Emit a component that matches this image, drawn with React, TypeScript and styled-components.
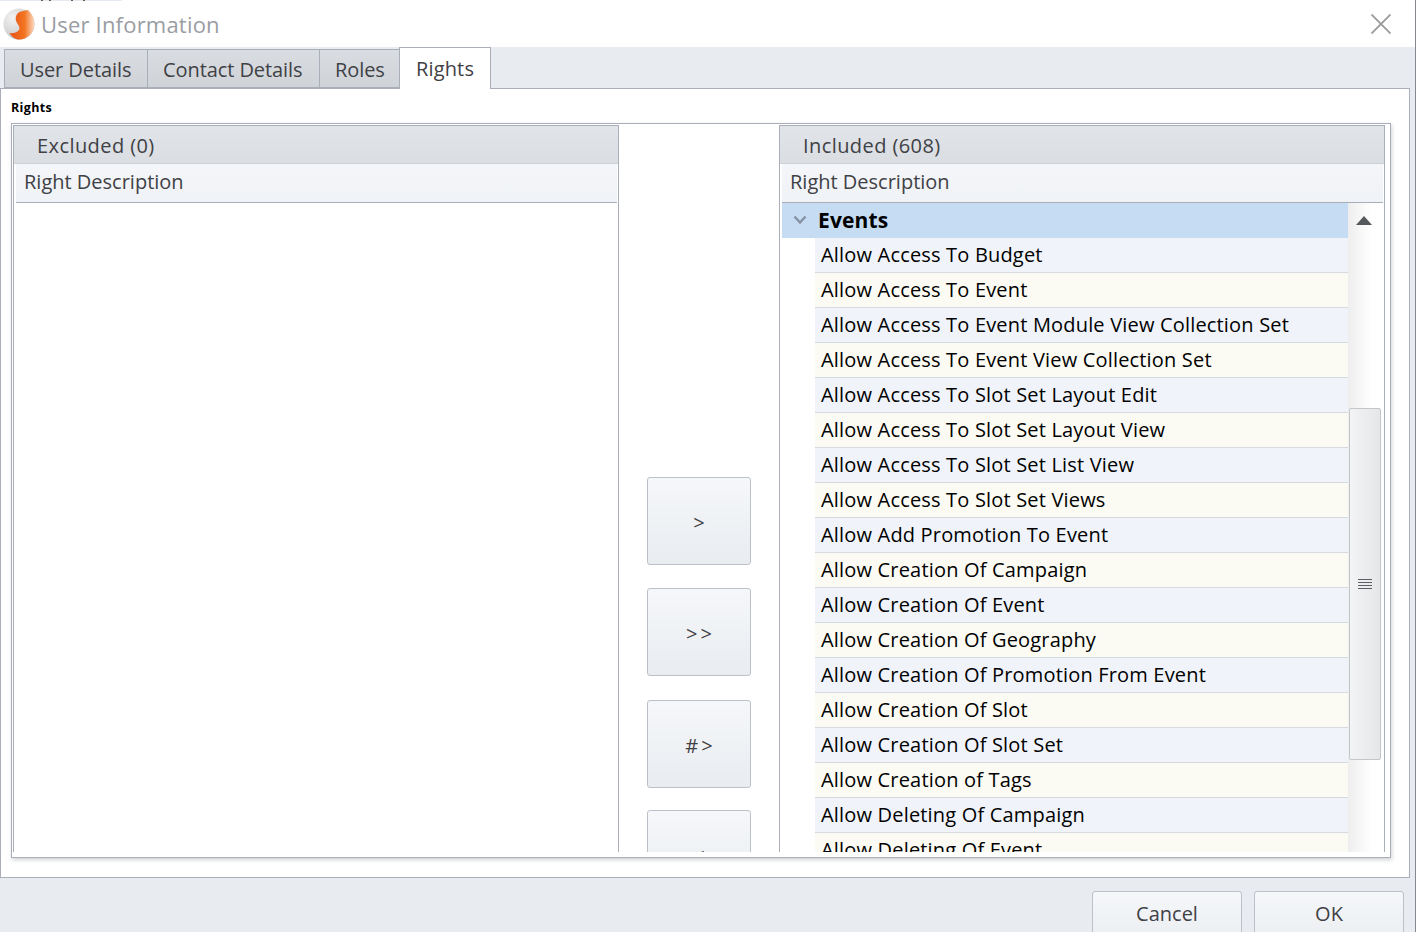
import React from 'react'
import styled, { createGlobalStyle } from 'styled-components'

const Global = createGlobalStyle`
html, body { margin: 0; padding: 0; background: #e8ebf0; }
* { box-sizing: border-box; }
`
const Window = styled.div`
width: 1416px;
height: 932px;
overflow: hidden;
display: flex;
flex-direction: column;
background: #e8ebf0;
border-right: 1px solid #85888e;
font-family: "Open Sans", "Noto Sans", sans-serif;
`
const TopSliver = styled.div`
height: 1px;
flex: none;
background: linear-gradient(90deg,
  #e6eaf2 41px, #6a5a50 41px, #6a5a50 43px, #e6eaf2 43px,
  #e6eaf2 49px, #6a5a50 49px, #6a5a50 51px, #e6eaf2 51px,
  #e6eaf2 71px, #6a5a50 71px, #6a5a50 73px, #e6eaf2 73px,
  #e6eaf2 83px, #6a5a50 83px, #6a5a50 85px, #e6eaf2 85px,
  #e6eaf2 122px, #fff 122px);
`
const TitleBar = styled.div`
height: 46px;
flex: none;
background: #fff;
display: flex;
align-items: center;
padding: 0 24px 1px 3px;
`
const Title = styled.div`
font-size: 22px;
letter-spacing: 0.2px;
color: #9a9da3;
margin-left: 6px;
padding-top: 1px;
flex: 1;
`
const TabStrip = styled.div`
height: 41px;
flex: none;
display: flex;
align-items: flex-end;
padding-left: 4px;
`
const Tab = styled.div<{ $w: number; $active?: boolean }>`
width: ${p => p.$w}px;
height: ${p => (p.$active ? 42 : 39)}px;
margin-bottom: ${p => (p.$active ? -1 : 0)}px;
margin-right: -1px;
position: relative;
z-index: ${p => (p.$active ? 1 : 0)};
display: flex;
align-items: center;
padding: ${p => (p.$active ? '0 0 0 16px' : '2px 0 0 15px')};
font-size: 20px;
letter-spacing: ${p => (p.$active ? 0.15 : -0.08)}px;
color: #3f4145;
background: ${p => (p.$active ? '#fff' : 'linear-gradient(#d9dce1, #cfd3d8)')};
border: 1px solid #a9aeb8;
border-bottom: ${p => (p.$active ? 'none' : '1px solid #a9aeb8')};
`
const Pane = styled.div`
width: 1410px;
height: 790px;
flex: none;
background: #fff;
border: 1px solid #a9aeb8;
padding: 10px 18px 0 10px;
`
const GroupLabel = styled.div`
font-size: 12.5px;
line-height: 17px;
font-weight: 700;
letter-spacing: 0.35px;
color: #000;
margin-bottom: 7px;
`
const GroupBox = styled.div`
height: 735px;
border: 1px solid #a9aeb8;
box-shadow: 1px 2px 4px rgba(120, 125, 135, 0.35);
padding: 1px 5px 5px 1px;
display: flex;
`
const ListPanel = styled.div`
width: 606px;
height: 727px;
overflow: hidden;
flex: none;
display: flex;
flex-direction: column;
border-left: 1px solid #a9aeb8;
border-right: 1px solid #a9aeb8;
border-top: 1px solid #a9aeb8;
`
const ListHeader = styled.div`
height: 38px;
flex: none;
display: flex;
align-items: center;
padding: 2px 0 0 23px;
font-size: 20px;
letter-spacing: 0.42px;
color: #3f4145;
background: linear-gradient(#e1e4e8, #dadde2);
border-bottom: 1px solid #cdd0d6;
`
const ColumnHeader = styled.div`
height: 39px;
flex: none;
margin: 0 1px 0 2px;
display: flex;
align-items: center;
padding: 0 0 3px 8px;
font-size: 20px;
letter-spacing: 0;
color: #3f4145;
background: linear-gradient(#f5f6f9, #eff2f6);
border-bottom: 1px solid #a9aeb8;
`
const ListBody = styled.div`
flex: 1;
display: flex;
min-height: 0;
margin: 0 2px 0 2px;
`
const Tree = styled.div`
flex: 1;
min-width: 0;
`
const GroupRow = styled.div`
height: 35px;
display: flex;
align-items: center;
background: #c5dcf3;
font-size: 21px;
font-weight: 700;
letter-spacing: 0.15px;
color: #000;
padding: 0 0 2px 11px;
gap: 11px;
`
const Row = styled.div<{ $odd: boolean }>`
height: 35px;
margin-left: 33px;
display: flex;
align-items: center;
padding: 0 0 2px 6px;
font-size: 20px;
letter-spacing: 0.18px;
color: #000;
background: ${p => (p.$odd ? '#fbfbf4' : '#f0f4fa')};
border-bottom: 1px solid #d5d9e0;
`
const Scrollbar = styled.div`
width: 34px;
flex: none;
display: flex;
flex-direction: column;
align-items: center;
background: linear-gradient(90deg, #eeeeef, #fff 70%);
padding-top: 13px;
`
const UpArrowIcon = styled.svg`
flex: none;
margin-right: 2px;
`
const Thumb = styled.div`
width: 32px;
height: 352px;
margin-top: 183px;
flex: none;
display: flex;
flex-direction: column;
align-items: center;
justify-content: center;
gap: 2px;
background: linear-gradient(90deg, #f3f4f5, #e4e6e8);
border: 1px solid #c3c6cb;
border-radius: 2px;
`
const Grip = styled.div`
width: 14px;
height: 1px;
background: #5c5f64;
`
const Middle = styled.div`
width: 160px;
flex: none;
height: 727px;
overflow: hidden;
display: flex;
flex-direction: column;
align-items: center;
padding-top: 352px;
`
const MoveButton = styled.div<{ $gap: number }>`
width: 104px;
height: 88px;
flex: none;
margin-bottom: ${p => p.$gap}px;
display: flex;
align-items: center;
justify-content: center;
padding: 2px 0 0 3px;
font-size: 20px;
letter-spacing: 3px;
color: #3f4145;
background: linear-gradient(#f5f7fa, #e9ecf0);
border: 1px solid #bcc0c8;
border-radius: 3px;
`
const Footer = styled.div`
flex: 1;
display: flex;
justify-content: flex-end;
gap: 12px;
padding: 13px 11px 0 0;
`
const FooterButton = styled.div`
width: 150px;
height: 60px;
display: flex;
align-items: flex-start;
justify-content: center;
padding-top: 8px;
font-size: 20px;
color: #3f4145;
background: linear-gradient(#f5f7fa, #e9ecf0);
border: 1px solid #bcc0c8;
border-radius: 3px;
`

const rights = [
  'Allow Access To Budget',
  'Allow Access To Event',
  'Allow Access To Event Module View Collection Set',
  'Allow Access To Event View Collection Set',
  'Allow Access To Slot Set Layout Edit',
  'Allow Access To Slot Set Layout View',
  'Allow Access To Slot Set List View',
  'Allow Access To Slot Set Views',
  'Allow Add Promotion To Event',
  'Allow Creation Of Campaign',
  'Allow Creation Of Event',
  'Allow Creation Of Geography',
  'Allow Creation Of Promotion From Event',
  'Allow Creation Of Slot',
  'Allow Creation Of Slot Set',
  'Allow Creation of Tags',
  'Allow Deleting Of Campaign',
  'Allow Deleting Of Event',
]

const Logo = () => (
  <svg width="32" height="32" viewBox="0 0 32 32">
    <defs>
      <radialGradient id="ball" cx="0.3" cy="0.3" r="0.85">
        <stop offset="0" stopColor="#f2f2f2" />
        <stop offset="0.6" stopColor="#d4d4d4" />
        <stop offset="1" stopColor="#9c9c9c" />
      </radialGradient>
      <linearGradient id="swoosh" x1="0.1" y1="0.5" x2="1" y2="0.5">
        <stop offset="0" stopColor="#e8561a" />
        <stop offset="0.55" stopColor="#f3741f" />
        <stop offset="1" stopColor="#fbdcc6" />
      </linearGradient>
    </defs>
    <circle cx="16" cy="16" r="15.5" fill="url(#ball)" />
    <path
      d="M25 2C21 3 17 3 15 5C12.5 7.5 12 11 13.5 14C15 17 17.5 19 16 22C14.5 24.5 10.5 25.5 6.5 25C9 29 12.5 31.5 16 31.5C24.5 31.5 31.5 24.5 31.5 16C31.5 10.5 29 5.5 25 2Z"
      fill="url(#swoosh)"
    />
  </svg>
)

const CloseIcon = () => (
  <svg width="20" height="20" viewBox="0 0 20 20">
    <path d="M0.5 0.5L19.5 19.5M19.5 0.5L0.5 19.5" stroke="#9a9a9a" strokeWidth="1.8" fill="none" />
  </svg>
)

const Chevron = () => (
  <svg width="14" height="10" viewBox="0 0 14 10">
    <path d="M1.5 1.5L7 7.5L12.5 1.5" stroke="#8593a4" strokeWidth="2.4" fill="none" />
  </svg>
)

const UpArrow = () => (
  <UpArrowIcon width="16" height="9" viewBox="0 0 16 9">
    <path d="M8 0L16 9H0Z" fill="#55585c" />
  </UpArrowIcon>
)

const App = () => {
  return (
    <Window>
      <Global />
      <TopSliver />
      <TitleBar>
        <Logo />
        <Title>User Information</Title>
        <CloseIcon />
      </TitleBar>
      <TabStrip>
        <Tab $w={144}>User Details</Tab>
        <Tab $w={173}>Contact Details</Tab>
        <Tab $w={81}>Roles</Tab>
        <Tab $w={92} $active>Rights</Tab>
      </TabStrip>
      <Pane>
        <GroupLabel>Rights</GroupLabel>
        <GroupBox>
          <ListPanel>
            <ListHeader>Excluded (0)</ListHeader>
            <ColumnHeader>Right Description</ColumnHeader>
          </ListPanel>
          <Middle>
            <MoveButton $gap={23}>&gt;</MoveButton>
            <MoveButton $gap={24}>&gt;&gt;</MoveButton>
            <MoveButton $gap={22}>#&gt;</MoveButton>
            <MoveButton $gap={0}>&lt;</MoveButton>
          </Middle>
          <ListPanel>
            <ListHeader>Included (608)</ListHeader>
            <ColumnHeader>Right Description</ColumnHeader>
            <ListBody>
              <Tree>
                <GroupRow>
                  <Chevron />
                  Events
                </GroupRow>
                {rights.map((r, i) => (
                  <Row key={r} $odd={i % 2 === 1}>{r}</Row>
                ))}
              </Tree>
              <Scrollbar>
                <UpArrow />
                <Thumb>
                  <Grip />
                  <Grip />
                  <Grip />
                  <Grip />
                </Thumb>
              </Scrollbar>
            </ListBody>
          </ListPanel>
        </GroupBox>
      </Pane>
      <Footer>
        <FooterButton>Cancel</FooterButton>
        <FooterButton>OK</FooterButton>
      </Footer>
    </Window>
  )
}

export default App
